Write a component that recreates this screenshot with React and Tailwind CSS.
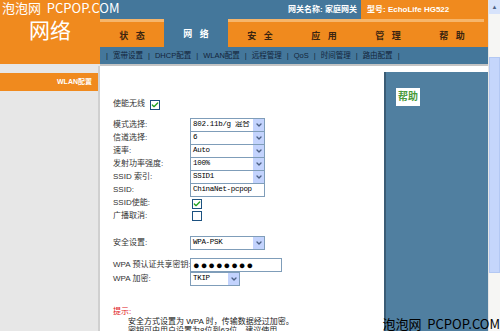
import { Check, ChevronDown } from 'lucide-react';

const font = { fontFamily: '"Liberation Sans", "Noto Sans CJK SC", sans-serif' };
const mono = { fontFamily: '"Liberation Mono", "Noto Sans CJK SC", monospace' };

const tabs = ['状 态', '网 络', '安 全', '应 用', '管 理', '帮 助'];
const subnav = ['宽带设置', 'DHCP配置', 'WLAN配置', '远程管理', 'QoS', '时间管理', '路由配置'];

function Checkbox({ checked }) {
  return (
    <span className="inline-flex w-[10px] h-[10px] items-center justify-center border border-[#1c5180] bg-white">
      {checked && <Check className="w-[8px] h-[8px] text-[#21a121]" strokeWidth={4} />}
    </span>
  );
}

function Select({ value, width = 'w-[75px]' }) {
  return (
    <div className={`flex ${width} h-[14px] items-center border border-[#7f9db9] bg-white`}>
      <span className="flex-1 overflow-hidden whitespace-nowrap pl-[2px] text-[7.5px] leading-none tracking-[-0.3px] text-black" style={mono}>
        {value}
      </span>
      <span className="flex w-[12px] h-[12px] shrink-0 items-center justify-center bg-[#c3d3fd] border-l border-white">
        <ChevronDown className="w-[8px] h-[8px] text-[#4d6185]" strokeWidth={4} />
      </span>
    </div>
  );
}

function Row({ label, children, className = 'h-[13px]' }) {
  return (
    <div className={`flex items-center ${className}`}>
      <span className="w-[77px] shrink-0 whitespace-nowrap text-[8px] leading-none text-[#333]">{label}</span>
      {children}
    </div>
  );
}

export default function App() {
  return (
    <div className="relative flex w-[500px] h-[331px] overflow-hidden bg-white" style={font}>
      <div className="flex flex-col w-[488px]">
        {/* header */}
        <div className="flex h-[64px]">
          <div className="flex w-[100px] items-start justify-center bg-[#f08a1e] pt-[20px]">
            <span className="text-[21px] leading-none text-white">网络</span>
          </div>
          <div className="flex flex-1 flex-col">
            <div className="flex h-[19px]">
              <div className="flex flex-1 items-center justify-end bg-[#44779b] pr-[4px] text-[8px] font-bold text-white">
                网关名称: 家庭网关
              </div>
              <div className="flex w-[127px] items-center bg-[#f08a1e] pl-[6px] text-[8px] font-bold text-white">
                型号: EchoLife HG522
              </div>
            </div>
            <div className="flex h-[28px] bg-[#f08a1e]">
              {tabs.map((t, i) => (
                <div
                  key={t}
                  className={`flex w-[64px] items-center justify-center pt-[4px] text-[9px] font-bold whitespace-pre ${
                    i === 1
                      ? 'bg-[#44779b] text-white'
                      : 'border-t-[3px] border-[#f6b56a] text-[#3b2410]'
                  }`}
                >
                  {t.replace(' ', '   ')}
                </div>
              ))}
              <div className="flex-1" />
            </div>
            <div className="flex h-[17px] items-center gap-[5px] whitespace-nowrap bg-[#44779b] pl-[6px] text-[7.5px] text-[#13243a]">
              <span>|</span>
              {subnav.map((s) => (
                <span key={s} className="flex gap-[5px]">
                  <span>{s}</span>
                  <span>|</span>
                </span>
              ))}
            </div>
          </div>
        </div>
        <div className="flex h-[6px]">
          <div className="w-[100px] bg-[#e6e6e6]" />
          <div className="flex-1 bg-[#e2e2e2] border-b-2 border-[#c4c4c4]" />
        </div>

        {/* body */}
        <div className="flex flex-1">
          <div className="flex w-[100px] flex-col bg-[#e7e7e7] border-r-2 border-[#d0d0d0] pt-[7px]">
            <div className="flex h-[18px] items-center justify-end bg-[#f08a1e] pr-[6px] text-[7px] font-bold text-white">
              WLAN配置
            </div>
          </div>

          <div className="flex w-[284px] flex-col pl-[13px] pt-[32px]">
            <Row label="使能无线" className="h-[12px]">
              <span className="-ml-[40px]">
                <Checkbox checked />
              </span>
            </Row>
            <div className="h-[8px]" />
            <Row label="模式选择:"><Select value="802.11b/g 混合" /></Row>
            <Row label="信道选择:"><Select value="6" /></Row>
            <Row label="速率:"><Select value="Auto" /></Row>
            <Row label="发射功率强度:"><Select value="100%" /></Row>
            <Row label="SSID 索引:"><Select value="SSID1" /></Row>
            <Row label="SSID:">
              <div className="flex w-[75px] h-[14px] items-center whitespace-nowrap border border-[#7f9db9] pl-[2px] text-[7.5px] leading-none tracking-[-0.3px]" style={mono}>
                ChinaNet-pcpop
              </div>
            </Row>
            <Row label="SSID使能:"><span className="ml-[2px]"><Checkbox checked /></span></Row>
            <Row label="广播取消:"><span className="ml-[2px]"><Checkbox /></span></Row>
            <div className="h-[14px]" />
            <Row label="安全设置:" className="h-[14px]"><Select value="WPA-PSK" /></Row>
            <div className="h-[8px]" />
            <Row label="WPA 预认证共享密钥:" className="h-[14px]">
              <div className="flex w-[92px] h-[14px] items-center border border-[#7f9db9] pl-[2px] text-[11px] leading-none tracking-[1px]">
                ●●●●●●●●
              </div>
            </Row>
            <Row label="WPA 加密:" className="h-[14px]"><Select value="TKIP" width="w-[50px]" /></Row>
            <div className="h-[21px]" />
            <div className="text-[8px] leading-[10px] text-[#e0201a]">提示:</div>
            <div className="whitespace-nowrap pl-[15px] text-[8px] leading-[9px] text-[#222]">
              <div>安全方式设置为 WPA 时，传输数据经过加密。</div>
              <div>密钥可由用户设置为8位到63位，建议使用。</div>
            </div>
          </div>

          <div className="flex flex-1 flex-col">
            <div className="h-[6px] bg-white" />
            <div className="flex-1 bg-[#507fa0] border-l-2 border-[#3a5c75] pl-[10px] pt-[11px]">
              <span className="inline-block bg-white px-[2px] py-[4px] text-[10px] font-bold leading-none text-[#4a9a3a]">帮助</span>
            </div>
          </div>
        </div>
      </div>

      {/* scrollbar */}
      <div className="flex w-[12px] flex-col bg-[#f6f6f4] border-l border-[#e6e6e6]">
        <div className="flex h-[14px] items-center justify-center bg-[#d7e3fb]">
          <span className="text-[6px] text-[#4d6185]">▲</span>
        </div>
        <div className="h-[43px]" />
        <div className="h-[216px] bg-[#c5d6fb] border border-[#b3c8f3]" />
      </div>

      {/* watermarks */}
      <span className="absolute left-[2px] top-[1px] whitespace-pre text-[13px] leading-none text-white" style={{ fontFamily: '"Noto Sans CJK SC", sans-serif' }}>
        泡泡网  PCPOP.COM
      </span>
      <span className="absolute right-[0px] bottom-[1px] whitespace-pre text-[13px] leading-none text-black" style={{ fontFamily: '"Noto Sans CJK SC", sans-serif' }}>
        泡泡网  PCPOP.COM
      </span>
    </div>
  );
}
